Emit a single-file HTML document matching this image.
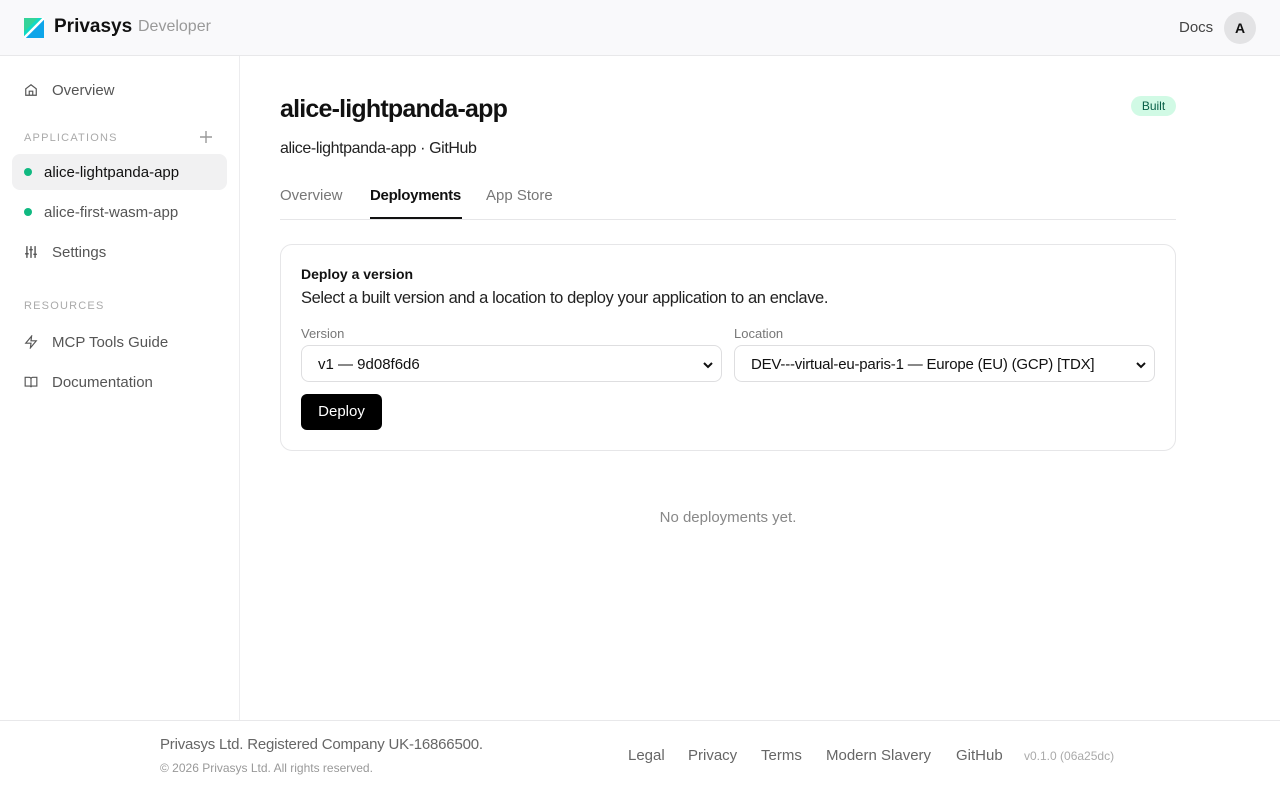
<!DOCTYPE html>
<html><head><meta charset="utf-8"><style>
*{box-sizing:border-box;margin:0;padding:0}
body{width:1280px;height:789px;overflow:hidden;background:#fff;font-family:"Liberation Sans",sans-serif;color:#111;position:relative}
.top{position:absolute;left:0;top:0;width:1280px;height:56px;background:#f9f9fb;border-bottom:1px solid #e8e8ea}
.logo{position:absolute;left:24px;top:18px}
.brand{position:absolute;left:54px;top:16px;font-size:19px;font-weight:bold;color:#111}
.dev{position:absolute;left:138px;top:18px;font-size:16px;color:#999}
.docs{position:absolute;left:1179px;top:19px;font-size:15px;color:#444}
.av{position:absolute;left:1224px;top:12px;width:32px;height:32px;border-radius:50%;background:#e3e3e5;text-align:center;line-height:32px;font-size:14px;font-weight:bold}
.side{position:absolute;left:0;top:56px;width:240px;height:665px;border-right:1px solid #ececee}
.it{position:absolute;left:24px;font-size:15px;color:#555;display:flex;align-items:center;height:20px}
.it svg{margin-right:14px}
.sec{position:absolute;left:24px;font-size:11px;letter-spacing:1.2px;color:#aaa}
.active{position:absolute;left:12px;top:154px;width:215px;height:36px;border-radius:8px;background:#f1f1f2}
.dot{width:8px;height:8px;border-radius:50%;background:#10b981;margin-right:12px}
h1{position:absolute;left:280px;top:95px;font-size:25px;font-weight:bold;letter-spacing:-0.8px}
.sub{position:absolute;left:280px;top:140px;font-size:16px;color:#222;letter-spacing:-0.4px}
.badge{position:absolute;left:1131px;top:96px;width:45px;height:20px;border-radius:10px;background:#d1fae5;color:#065f46;font-size:12px;text-align:center;line-height:20px}
.tabs{position:absolute;left:280px;top:219px;width:896px;border-top:1px solid #e6e6e8}
.tab{position:absolute;top:187px;font-size:15px;color:#777}
.card{position:absolute;left:280px;top:244px;width:896px;height:207px;border:1px solid #e6e6e8;border-radius:12px}
.sel{position:absolute;top:345px;height:37px;border:1px solid #dedee0;border-radius:8px;font-size:15px;padding:10px 16px;color:#111}
.sel svg{position:absolute;right:8px;top:15px}
.lbl{position:absolute;top:326px;font-size:13px;color:#777}
.btn{position:absolute;left:301px;top:394px;width:81px;height:36px;background:#000;color:#fff;border-radius:6px;font-size:15px;text-align:center;line-height:36px}
.foot{position:absolute;left:0;top:720px;width:1280px;height:69px;border-top:1px solid #e8e8ea}
.fl{position:absolute;top:747px;font-size:15px;color:#666}
</style></head><body>
<div class="top">
<svg class="logo" width="20" height="20" viewBox="0 0 20 20"><rect width="20" height="20" rx="2" fill="#10d9c4"/><polygon points="0,20 20,0 20,20" fill="#0ea5e9"/><polygon points="0,0 14,0 0,14" fill="#34d399"/><line x1="0" y1="20" x2="20" y2="0" stroke="#fff" stroke-width="2.5"/></svg>
<div class="brand">Privasys</div><div class="dev">Developer</div>
<div class="docs">Docs</div><div class="av">A</div>
</div>
<div class="side"></div>
<div class="active"></div>
<div class="it" style="top:80px"><svg width="14" height="14" viewBox="0 0 24 24" fill="none" stroke="#555" stroke-width="2"><path d="M3 10l9-7 9 7v11H3z M9 21v-7h6v7"/></svg>Overview</div>
<div class="sec" style="top:132px">APPLICATIONS</div>
<svg style="position:absolute;left:200px;top:131px" width="12" height="12" viewBox="0 0 12 12" stroke="#999" stroke-width="1.4"><path d="M6 0v12M0 6h12"/></svg>
<div class="it" style="top:162px;color:#111"><span class="dot"></span>alice-lightpanda-app</div>
<div class="it" style="top:202px"><span class="dot"></span>alice-first-wasm-app</div>
<div class="it" style="top:242px"><svg width="14" height="14" viewBox="0 0 24 24" fill="none" stroke="#555" stroke-width="2.4"><path d="M5 2v20M12 2v20M19 2v20M2 15h6M9 8h6M16 16h6"/></svg>Settings</div>
<div class="sec" style="top:300px">RESOURCES</div>
<div class="it" style="top:332px"><svg width="14" height="14" viewBox="0 0 24 24" fill="none" stroke="#555" stroke-width="2"><path d="M13 2L3 14h9l-1 8 10-12h-9z"/></svg>MCP Tools Guide</div>
<div class="it" style="top:372px"><svg width="14" height="14" viewBox="0 0 24 24" fill="none" stroke="#555" stroke-width="2"><path d="M2 4h7a3 3 0 013 3v14a2 2 0 00-2-2H2zM22 4h-7a3 3 0 00-3 3v14a2 2 0 012-2h8z"/></svg>Documentation</div>

<h1>alice-lightpanda-app</h1>
<div class="badge">Built</div>
<div class="sub">alice-lightpanda-app · GitHub</div>
<div class="tab" style="left:280px">Overview</div>
<div class="tab" style="left:370px;color:#111;font-weight:bold;letter-spacing:-0.3px">Deployments</div>
<div style="position:absolute;left:370px;top:217px;width:92px;height:2px;background:#111"></div>
<div class="tab" style="left:486px">App Store</div>
<div class="tabs"></div>
<div class="card"></div>
<div style="position:absolute;left:301px;top:266px;font-size:14px;font-weight:bold">Deploy a version</div>
<div style="position:absolute;left:301px;top:289px;font-size:16.5px;color:#222;letter-spacing:-0.4px">Select a built version and a location to deploy your application to an enclave.</div>
<div class="lbl" style="left:301px">Version</div>
<div class="lbl" style="left:734px">Location</div>
<div class="sel" style="left:301px;width:421px">v1 — 9d08f6d6<svg width="10" height="8" viewBox="0 0 10 8" fill="none" stroke="#111" stroke-width="2"><path d="M1 2l4 4 4-4"/></svg></div>
<div class="sel" style="left:734px;width:421px;letter-spacing:-0.2px">DEV---virtual-eu-paris-1 — Europe (EU) (GCP) [TDX]<svg width="10" height="8" viewBox="0 0 10 8" fill="none" stroke="#111" stroke-width="2"><path d="M1 2l4 4 4-4"/></svg></div>
<div class="btn">Deploy</div>
<div style="position:absolute;left:0;width:1456px;top:509px;text-align:center;font-size:15px;color:#888">No deployments yet.</div>

<div class="foot"></div>
<div style="position:absolute;left:160px;top:736px;font-size:15px;color:#666;letter-spacing:-0.2px">Privasys Ltd. Registered Company UK-16866500.</div>
<div style="position:absolute;left:160px;top:761px;font-size:12px;color:#999">© 2026 Privasys Ltd. All rights reserved.</div>
<div class="fl" style="left:628px">Legal</div>
<div class="fl" style="left:688px">Privacy</div>
<div class="fl" style="left:761px">Terms</div>
<div class="fl" style="left:826px">Modern Slavery</div>
<div class="fl" style="left:956px">GitHub</div>
<div style="position:absolute;left:1024px;top:749px;font-size:12px;color:#aaa">v0.1.0 (06a25dc)</div>
</body></html>
